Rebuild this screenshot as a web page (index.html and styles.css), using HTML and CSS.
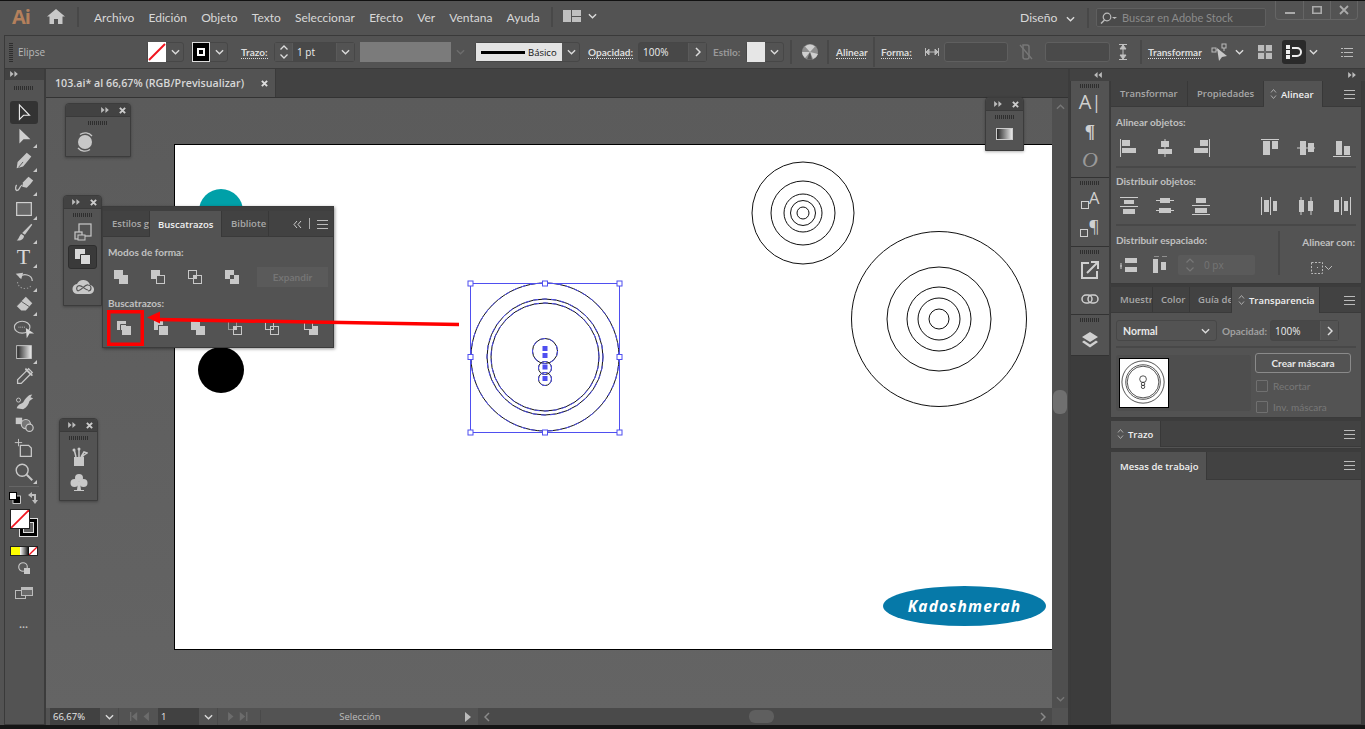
FILE: index.html
```html
<!DOCTYPE html>
<html lang="es">
<head>
<meta charset="utf-8">
<title>Adobe Illustrator</title>
<link rel="stylesheet" href="styles.css">
</head>
<body>
<svg class="defs" width="0" height="0" aria-hidden="true">
  <defs>
    <symbol id="chev" viewBox="0 0 10 6"><path d="M1 1l4 4 4-4" fill="none" stroke="currentColor" stroke-width="1.5"/></symbol>
    <symbol id="chevr" viewBox="0 0 6 10"><path d="M1 1l4 4-4 4" fill="none" stroke="currentColor" stroke-width="1.5"/></symbol>
    <symbol id="chevl" viewBox="0 0 6 10"><path d="M5 1L1 5l4 4" fill="none" stroke="currentColor" stroke-width="1.5"/></symbol>
    <symbol id="dblr" viewBox="0 0 9 7"><path d="M0 0l4 3.5L0 7zM5 0l4 3.5L5 7z" fill="currentColor"/></symbol>
    <symbol id="dbll" viewBox="0 0 9 7"><path d="M4 0L0 3.5 4 7zM9 0L5 3.5 9 7z" fill="currentColor"/></symbol>
    <symbol id="x" viewBox="0 0 8 8"><path d="M1 1l6 6M7 1L1 7" stroke="currentColor" stroke-width="2.2"/></symbol>
    <symbol id="menu" viewBox="0 0 11 9"><path d="M0 .5h11M0 4.5h11M0 8.5h11" stroke="currentColor"/></symbol>
    <symbol id="updown" viewBox="0 0 7 12"><path d="M1 4.5l2.5-3 2.5 3M1 7.500l2.500 3 2.500-3" fill="none" stroke="currentColor"/></symbol>
    <linearGradient id="grad"><stop offset="0" stop-color="#222"/><stop offset="1" stop-color="#eee"/></linearGradient>
  </defs>
</svg>

<header class="titlebar">
  <span class="ai-logo">Ai</span>
  <svg class="home" viewBox="0 0 18 15"><path d="M9 0l9 7.500h-2.500V15H11V10H7v5H2.500V7.500H0z" fill="#c8c8c8"/></svg>
  <i class="vsep sep-home"></i>
  <nav class="menu">
    <span>Archivo</span><span>Edición</span><span>Objeto</span><span>Texto</span><span>Seleccionar</span><span>Efecto</span><span>Ver</span><span>Ventana</span><span>Ayuda</span>
  </nav>
  <i class="vsep sep-menu"></i>
  <svg class="layout-ic" viewBox="0 0 18 12"><path d="M0 0h8v12H0zM9 0h9v6H9zM9 7h9v5H9z" fill="#c0c0c0"/></svg>
  <svg class="ch ch-layout"><use href="#chev"/></svg>
  <span class="workspace-name">Diseño</span>
  <svg class="ch ch-ws"><use href="#chev"/></svg>
  <i class="vsep sep-ws"></i>
  <div class="search">
    <svg class="search-ic" viewBox="0 0 18 12"><circle cx="7" cy="5" r="3.800" fill="none" stroke="#bbb" stroke-width="1.200"/><path d="M4.500 8L1 11.500" stroke="#bbb" stroke-width="1.500"/><path d="M12 5h5l-2.500 2z" fill="#bbb"/></svg>
    <span>Buscar en Adobe Stock</span>
  </div>
  <div class="winbtns">
    <span class="winbtn"><svg viewBox="0 0 10 10"><path d="M0 7h10v2H0z" fill="#aaa"/></svg></span>
    <span class="winbtn"><svg viewBox="0 0 10 10"><path d="M.8 1.800h8.400v6.500H.8z" fill="none" stroke="#aaa" stroke-width="1.600"/></svg></span>
    <span class="winbtn"><svg viewBox="0 0 10 10"><path d="M1 1l8 8M9 1l-8 8" stroke="#aaa" stroke-width="1.800"/></svg></span>
  </div>
</header>

<div class="controlbar">
  <i class="grip-v"></i>
  <span class="cb-name">Elipse</span>
  <div class="combo fillc">
    <span class="swatch none"><svg viewBox="0 0 18 18"><path d="M1 17L17 1" stroke="#f0141e" stroke-width="2"/></svg></span>
    <span class="chbox"><svg class="ch"><use href="#chev"/></svg></span>
  </div>
  <div class="combo strokec">
    <span class="swatch black"><i></i></span>
    <span class="chbox"><svg class="ch"><use href="#chev"/></svg></span>
  </div>
  <span class="lbl lbl-trazo">Trazo:</span>
  <div class="combo weight">
    <span class="spin"><svg viewBox="0 0 10 16"><path d="M1.500 5.500L5 2l3.500 3.500M1.500 10.500L5 14l3.500-3.500" fill="none" stroke="#ddd" stroke-width="1.300"/></svg></span>
    <span class="val">1 pt</span>
    <span class="chbox"><svg class="ch"><use href="#chev"/></svg></span>
  </div>
  <div class="disabled-field"><span class="chbox faded"><svg class="ch"><use href="#chev"/></svg></span></div>
  <div class="combo linestyle">
    <span class="line-prev"><i></i><b>Básico</b></span>
    <span class="chbox"><svg class="ch"><use href="#chev"/></svg></span>
  </div>
  <span class="lbl lbl-op">Opacidad:</span>
  <div class="combo opacity">
    <span class="val">100%</span>
    <span class="chbox"><svg class="chr"><use href="#chevr"/></svg></span>
  </div>
  <span class="lbl-plain lbl-est">Estilo:</span>
  <div class="combo stylec">
    <span class="swatch light"></span>
    <span class="chbox"><svg class="ch"><use href="#chev"/></svg></span>
  </div>
  <i class="vsep sep-a"></i>
  <svg class="recolor" viewBox="0 0 16 16"><circle cx="8" cy="8" r="8" fill="#8d8d8d"/><path d="M8 8L3 2.500A8 8 0 0 1 13 2.500zM8 8l8 2a8 8 0 0 1-5 5zM8 8l-5 6A8 8 0 0 1 0 8z" fill="#cfcfcf"/><path d="M8 8l-3 7.500 5 .300z" fill="#555"/></svg>
  <i class="vsep sep-b"></i>
  <span class="lbl lbl-ali">Alinear</span>
  <i class="vsep sep-c"></i>
  <span class="lbl lbl-for">Forma:</span>
  <svg class="w-ic" viewBox="0 0 14 8"><path d="M.5 0v8M13.500 0v8M1 4h12M1 4l3-3v6zM13 4l-3-3v6z" stroke="#bbb" fill="#bbb"/></svg>
  <span class="empty-field ef1"></span>
  <svg class="link-ic" viewBox="0 0 14 18"><path d="M4 2h4a2 2 0 0 1 2 2v10a2 2 0 0 1-2 2H6a2 2 0 0 1-2-2z" fill="none" stroke="#777" stroke-width="1.500"/><path d="M1 2l12 14" stroke="#777" stroke-width="1.300"/></svg>
  <span class="empty-field ef2"></span>
  <svg class="h-ic" viewBox="0 0 8 16"><path d="M0 .5h8M0 15.500h8M4 1v14M4 1L1 5h6zM4 15l-3-4h6z" stroke="#c0c0c0" fill="#c0c0c0"/></svg>
  <i class="vsep sep-d"></i>
  <span class="lbl lbl-tra">Transformar</span>
  <svg class="sel-ic" viewBox="0 0 18 18"><rect x="1" y="5" width="4" height="4" fill="none" stroke="#bbb"/><rect x="11" y="1" width="4" height="4" fill="none" stroke="#bbb"/><path d="M5 7h3M13 5v3" stroke="#bbb"/><path d="M6 5l10 8-5 1-3 4z" fill="#c8c8c8"/></svg>
  <svg class="ch ch-sel"><use href="#chev"/></svg>
  <svg class="grid-ic" viewBox="0 0 14 14"><path d="M0 0h6v6H0zM8 0h6v6H8zM0 8h6v6H0zM8 8h6v6H8z" fill="#bbb"/><path d="M7 0v14M0 7h14" stroke="#777"/></svg>
  <span class="snap"><svg viewBox="0 0 16 14"><path d="M0 0h4v4H0zM0 5h4v4H0zM0 10h4v4H0z" fill="#eee"/><path d="M6 3h5a4 4 0 0 1 0 8H6" fill="none" stroke="#eee" stroke-width="2"/></svg></span>
  <svg class="ch ch-snap"><use href="#chev"/></svg>
  <svg class="list-ic" viewBox="0 0 12 9"><path d="M3 .5h9M3 4.500h9M3 8.500h9M0 .5h2M0 4.500h2M0 8.500h2" stroke="#bbb"/></svg>
</div>

<div class="workspace">
  <aside class="toolbar">
    <div class="tb-head"><svg class="dbl"><use href="#dblr"/></svg></div>
    <i class="grip g-tool"></i>
    <div class="tools">
      <span class="tool active"><svg viewBox="0 0 24 24"><path d="M7 3v16l4.500-4.500H18z" fill="none" stroke="#eee" stroke-width="1.200"/></svg></span>
      <span class="tool more"><svg viewBox="0 0 24 24"><path d="M7 3v16l4.500-4.500H19z" fill="#d0d0d0"/></svg></span>
      <span class="tool more"><svg viewBox="0 0 24 24"><path d="M15 3l5 4-3 4-6 7-7 2 1-7 6-6z" fill="#c8c8c8"/><path d="M6 19l5-6" stroke="#555"/></svg></span>
      <span class="tool more"><svg viewBox="0 0 24 24"><path d="M17 3l5 4-3 4-4 4-5-1 1-5 4-4z" fill="#c8c8c8"/><path d="M10 12c-4 2-2 6-6 6-2-1-1-5 0-6" fill="none" stroke="#c8c8c8" stroke-width="1.400"/></svg></span>
      <span class="tool more"><svg viewBox="0 0 24 24"><rect x="4" y="5" width="16" height="14" fill="#676767" stroke="#d0d0d0" stroke-width="1.300"/></svg></span>
      <span class="tool more"><svg viewBox="0 0 24 24"><path d="M20 2l1 1-8 11-3-2zM9 13c-2 1-2 5-5 7 4 1 8-1 8-5z" fill="#c8c8c8"/></svg></span>
      <span class="tool more"><span class="t-glyph">T</span></span>
      <span class="tool more"><svg viewBox="0 0 24 24"><path d="M7 8c4-5 14-3 14 4" fill="none" stroke="#c8c8c8" stroke-width="1.300"/><path d="M3 4l8-1-2 7z" fill="#c8c8c8"/><path d="M5 13c0 7 10 10 15 4" fill="none" stroke="#999" stroke-width="1.200" stroke-dasharray="1.500 2"/></svg></span>
      <span class="tool more"><svg viewBox="0 0 24 24"><path d="M14 3l7 7-7 8H9l-5-5z" fill="#c8c8c8"/><path d="M4 13l5-5 9 6" fill="none" stroke="#555"/></svg></span>
      <span class="tool"><svg viewBox="0 0 24 24"><ellipse cx="10" cy="10" rx="8.500" ry="6.500" fill="none" stroke="#c8c8c8" stroke-width="1.200"/><path d="M6 10h8" stroke="#c8c8c8" stroke-dasharray="1 1"/><path d="M14 11l9 6-5 0-3 5z" fill="#d8d8d8"/></svg></span>
      <span class="tool more"><svg viewBox="0 0 24 24"><rect x="4" y="4" width="16" height="14" fill="url(#grad)" stroke="#ccc"/></svg></span>
      <span class="tool"><svg viewBox="0 0 24 24"><path d="M17 3l4 4-2 2-10 10H5v-4L15 5z" fill="none" stroke="#c8c8c8" stroke-width="1.400"/><path d="M14 2l8 8-2 1-7-7z" fill="#c8c8c8"/></svg></span>
      <span class="tool"><svg viewBox="0 0 24 24"><path d="M4 20c2-6 6-4 8-8 2-3 5-7 9-7l-2 3 3 1-4 3c-1 4-3 7-7 9z" fill="#c8c8c8"/><circle cx="6" cy="11" r="2.200" fill="none" stroke="#c8c8c8"/></svg></span>
      <span class="tool"><svg viewBox="0 0 24 24"><path d="M3 4h7v7H3z" fill="#c8c8c8"/><circle cx="14" cy="11" r="5" fill="#777" stroke="#c8c8c8" stroke-width="1.300"/><circle cx="18" cy="15" r="4" fill="#5a5a5a" stroke="#c8c8c8" stroke-width="1.300"/></svg></span>
      <span class="tool"><svg viewBox="0 0 24 24"><path d="M8 8h9l3 3v9H8z" fill="none" stroke="#c8c8c8" stroke-width="1.400"/><path d="M6 1v8M2 5h8" stroke="#c8c8c8"/></svg></span>
      <span class="tool more"><svg viewBox="0 0 24 24"><circle cx="10" cy="9" r="6.500" fill="none" stroke="#c8c8c8" stroke-width="1.500"/><path d="M15 14l6 6" stroke="#c8c8c8" stroke-width="2.200"/></svg></span>
    </div>
    <i class="tb-rule"></i>
    <div class="mini-row">
      <svg viewBox="0 0 12 12"><rect x="4" y="4" width="7.500" height="7.500" fill="#000" stroke="#eee" stroke-width=".8"/><rect x=".5" y=".5" width="7" height="7" fill="#fff" stroke="#000"/></svg>
      <svg viewBox="0 0 12 12"><path d="M1 3l4-3v2h4v6h2l-3 4-3-4h2V4H5v2z" fill="#bdbdbd"/></svg>
    </div>
    <div class="fillstroke">
      <span class="fs-stroke"><i></i></span>
      <span class="fs-fill"><svg viewBox="0 0 18 18"><path d="M0 18L18 0" stroke="#f0141e" stroke-width="1.800"/></svg></span>
    </div>
    <div class="modes">
      <i class="m-yellow"></i><i class="m-grad"></i>
      <svg viewBox="0 0 9 9"><rect width="9" height="9" fill="#fff"/><path d="M0 9L9 0" stroke="#f0141e" stroke-width="1.500"/></svg>
    </div>
    <svg class="drawmode" viewBox="0 0 12 12"><circle cx="5" cy="5" r="4.300" fill="#5a5a5a" stroke="#c8c8c8" stroke-width="1.100"/><path d="M6 6h6v6H6z" fill="#c8c8c8"/></svg>
    <svg class="screenmode" viewBox="0 0 18 12"><rect x=".5" y="3.500" width="10" height="8" fill="none" stroke="#bbb"/><rect x="6.500" y=".5" width="11" height="8" fill="#6a6a6a" stroke="#bbb"/><path d="M6.500 1h11v2h-11z" fill="#bbb"/></svg>
    <span class="dots">•••</span>
  </aside>

  <main class="doc">
    <div class="doc-tabs">
      <div class="doc-tab"><span>103.ai* al 66,67% (RGB/Previsualizar)</span><svg class="tabx"><use href="#x"/></svg></div>
    </div>
    <div class="canvas-row">
      <div class="canvas">
        <div class="artboard">
          <svg class="art" viewBox="175 145 878 504">
            <circle cx="221" cy="211" r="22" fill="#00a0a8"/>
            <circle cx="221" cy="370" r="23" fill="#000"/>
            <g class="rings">
              <circle cx="803" cy="213" r="51"/><circle cx="803" cy="213" r="32"/><circle cx="803" cy="213" r="19"/><circle cx="803" cy="213" r="12.500"/><circle cx="803" cy="213" r="6"/>
              <circle cx="939" cy="319" r="87.500"/><circle cx="939" cy="319" r="52"/><circle cx="939" cy="319" r="32"/><circle cx="939" cy="319" r="21"/><circle cx="939" cy="319" r="10"/>
              <circle cx="545" cy="357" r="74"/><circle cx="545" cy="357" r="58"/><circle cx="545" cy="357" r="54"/><circle cx="545" cy="351" r="12.500"/><circle cx="545" cy="368" r="6.500"/><circle cx="545" cy="379" r="6.500"/>
            </g>
            <g class="sel">
              <circle cx="545" cy="357" r="74"/><circle cx="545" cy="357" r="58"/><circle cx="545" cy="357" r="54"/><circle cx="545" cy="351" r="12.500"/><circle cx="545" cy="368" r="6.500"/><circle cx="545" cy="379" r="6.500"/>
              <rect x="470.500" y="283.500" width="149" height="149"/>
            </g>
            <g class="sel-dots"><rect x="542.500" y="346" width="5" height="5"/><rect x="542.500" y="353" width="5" height="5"/><rect x="542.500" y="364.500" width="5" height="5"/><rect x="542.500" y="376" width="5" height="5"/></g>
            <g class="handles">
              <rect x="468" y="281" width="5" height="5"/><rect x="542.500" y="281" width="5" height="5"/><rect x="617" y="281" width="5" height="5"/>
              <rect x="468" y="354.500" width="5" height="5"/><rect x="617" y="354.500" width="5" height="5"/>
              <rect x="468" y="430" width="5" height="5"/><rect x="542.500" y="430" width="5" height="5"/><rect x="617" y="430" width="5" height="5"/>
            </g>
            <ellipse cx="964.500" cy="606" rx="81.500" ry="20" fill="#0679a8"/>
            <text x="964.500" y="612" class="logo-text">Kadoshmerah</text>
          </svg>
        </div>
      </div>
      <div class="vscroll">
        <svg class="chs"><use href="#chev"/></svg>
        <i class="vthumb"></i>
        <svg class="chs"><use href="#chev"/></svg>
      </div>
    </div>
    <footer class="status">
      <span class="st-field st-zoom">66,67%</span>
      <span class="st-ch"><svg class="ch"><use href="#chev"/></svg></span>
      <span class="st-nav"><svg viewBox="0 0 22 10"><path d="M1 0h1.500v10H1zM9 0v10L3 5zM22 0v10l-6-5z" fill="#6c6c6c"/></svg></span>
      <span class="st-field st-page">1</span>
      <span class="st-ch"><svg class="ch"><use href="#chev"/></svg></span>
      <span class="st-nav"><svg viewBox="0 0 22 10"><path d="M0 0v10l6-5zM13 0v10l6-5zM20 0h1.500v10H20z" fill="#6c6c6c"/></svg></span>
      <span class="st-label">Selección</span>
      <svg class="st-play" viewBox="0 0 6 10"><path d="M0 0l6 5-6 5z" fill="#bbb"/></svg>
      <div class="hscroll">
        <svg class="st-l"><use href="#chevl"/></svg>
        <i class="hthumb"></i>
        <svg class="st-r"><use href="#chevr"/></svg>
      </div>
      <span class="corner"></span>
    </footer>
  </main>

  <aside class="dock">
    <div class="dock-head"><svg class="dbl dbl-a"><use href="#dbll"/></svg><svg class="dbl dbl-b"><use href="#dblr"/></svg></div>
    <div class="dock-body">
      <div class="iconcol">
        <div class="icgroup ig1">
          <i class="grip"></i>
          <span class="dock-g g-a">A<small>|</small></span>
          <span class="dock-g g-p">¶</span>
          <span class="dock-g g-o">O</span>
        </div>
        <div class="icgroup ig2">
          <i class="grip"></i>
          <span class="dock-g2"><i class="sq"></i><b>A</b></span>
          <span class="dock-g2"><i class="sq"></i><b>¶</b></span>
        </div>
        <div class="icgroup ig3">
          <i class="grip"></i>
          <svg class="ic-exp" viewBox="0 0 18 18"><path d="M8 2H1v15h15v-7" fill="none" stroke="#d0d0d0" stroke-width="2"/><path d="M6 12L16 2M10 1h7v7" fill="none" stroke="#d0d0d0" stroke-width="2"/></svg>
          <svg class="ic-link" viewBox="0 0 18 10"><rect x="1" y="1" width="10" height="8" rx="4" fill="none" stroke="#d0d0d0" stroke-width="1.500"/><rect x="7" y="1" width="10" height="8" rx="4" fill="none" stroke="#d0d0d0" stroke-width="1.500"/></svg>
        </div>
        <div class="icgroup ig4">
          <i class="grip"></i>
          <svg class="ic-layers" viewBox="0 0 16 16"><path d="M8 0l8 5-8 5-8-5zM2 8.500l6 4 6-4 2 1.500-8 5.500L0 10z" fill="#d0d0d0"/></svg>
        </div>
      </div>
      <div class="panels">
        <section class="panel p-align">
          <div class="tabs">
            <span class="tab t-transf">Transformar</span>
            <span class="tab t-prop">Propiedades</span>
            <span class="tab on t-ali"><svg class="ud"><use href="#updown"/></svg>Alinear</span>
            <svg class="pmenu"><use href="#menu"/></svg>
          </div>
          <div class="pbody">
            <h4>Alinear objetos:</h4>
            <div class="airow">
              <div class="aigroup">
                <svg viewBox="0 0 18 18"><path d="M.5 0v18" stroke="#ccc"/><path d="M2 1h8v6H2zM2 9h14v5H2z"/></svg>
                <svg viewBox="0 0 18 18"><path d="M9 0v18" stroke="#ccc"/><path d="M5 2h8v6H5zM2 10h14v5H2z"/></svg>
                <svg viewBox="0 0 18 18"><path d="M17.500 0v18" stroke="#ccc"/><path d="M8 1h8v6H8zM2 9h14v5H2z"/></svg>
              </div>
              <div class="aigroup">
                <svg viewBox="0 0 18 18"><path d="M0 .5h18" stroke="#ccc"/><path d="M2 2h7v14H2zM11 2h6v8h-6z"/></svg>
                <svg viewBox="0 0 18 18"><path d="M0 9h18" stroke="#ccc"/><path d="M3 2h6v14H3zM11 4h6v9h-6z"/></svg>
                <svg viewBox="0 0 18 18"><path d="M0 17.500h18" stroke="#ccc"/><path d="M3 2h6v14H3zM11 7h6v9h-6z"/></svg>
              </div>
            </div>
            <i class="hr"></i>
            <h4>Distribuir objetos:</h4>
            <div class="airow">
              <div class="aigroup">
                <svg viewBox="0 0 18 18"><path d="M0 .5h18M0 9.500h18" stroke="#ccc"/><path d="M4 3h10v4H4zM3 12h12v5H3z"/></svg>
                <svg viewBox="0 0 18 18"><path d="M0 3.500h18M0 13.500h18" stroke="#ccc"/><path d="M4 1h10v5H4zM3 11h12v5H3z"/></svg>
                <svg viewBox="0 0 18 18"><path d="M0 8.500h18M0 17.500h18" stroke="#ccc"/><path d="M4 1h10v5H4zM3 11h12v5H3z"/></svg>
              </div>
              <div class="aigroup">
                <svg viewBox="0 0 18 18"><path d="M.5 0v18M9.500 0v18" stroke="#ccc"/><path d="M3 3h5v12H3zM12 4h4v10h-4z"/></svg>
                <svg viewBox="0 0 18 18"><path d="M4 0v18M14 0v18" stroke="#ccc"/><path d="M2 3h5v12H2zM11 4h5v10h-5z"/></svg>
                <svg viewBox="0 0 18 18"><path d="M8.500 0v18M17.500 0v18" stroke="#ccc"/><path d="M1 3h5v12H1zM11 4h4v10h-4z"/></svg>
              </div>
            </div>
            <i class="hr"></i>
            <div class="ai-bottom">
              <div class="ai-left">
                <h4>Distribuir espaciado:</h4>
                <div class="spacing">
                  <svg viewBox="0 0 18 16"><path d="M1 6v6M0 9h2" stroke="#ccc"/><path d="M5 1h12v5H5zM5 10h12v5H5z" fill="#c8c8c8"/></svg>
                  <svg viewBox="0 0 16 18"><path d="M2 0h5M10 0h5" stroke="#ccc"/><path d="M1 3h5v14H1zM9 6h5v8H9z" fill="#c8c8c8"/></svg>
                  <div class="px-field"><svg viewBox="0 0 10 16"><path d="M1.500 5.500L5 2l3.500 3.500M1.500 10.500L5 14l3.500-3.500" fill="none" stroke="#777" stroke-width="1.200"/></svg><span>0 px</span></div>
                </div>
              </div>
              <div class="ai-right">
                <h4>Alinear con:</h4>
                <svg class="ali-to" viewBox="0 0 24 14"><rect x="1.500" y="1.500" width="11" height="11" fill="none" stroke="#bbb" stroke-dasharray="2 1.500"/><path d="M7 6h1v1H7z" fill="#bbb"/><path d="M15 5l3.500 3.500L22 5" fill="none" stroke="#bbb"/></svg>
              </div>
            </div>
          </div>
        </section>

        <section class="panel p-trans">
          <div class="tabs">
            <span class="tab t-mue">Muestr</span>
            <span class="tab t-col">Color</span>
            <span class="tab t-gui">Guía de</span>
            <span class="tab on t-tra"><svg class="ud"><use href="#updown"/></svg>Transparencia</span>
            <svg class="pmenu"><use href="#menu"/></svg>
          </div>
          <div class="pbody">
            <div class="blend">
              <div class="combo c-normal"><span>Normal</span><svg class="ch"><use href="#chev"/></svg></div>
              <span class="lbl-plain op-l">Opacidad:</span>
              <div class="combo c-op"><span class="val">100%</span><span class="chbox"><svg class="chr"><use href="#chevr"/></svg></span></div>
            </div>
            <i class="hr hr-t"></i>
            <div class="mask">
              <div class="thumbwrap">
                <svg class="thumb" viewBox="0 0 50 50">
                  <g class="rings thin"><circle cx="24" cy="24" r="22"/><circle cx="24" cy="24" r="18"/><circle cx="24" cy="24" r="16.500"/><circle cx="24" cy="21" r="3.500"/><circle cx="24" cy="26" r="1.800"/><circle cx="24" cy="29" r="1.800"/></g>
                </svg>
              </div>
              <div class="maskctl">
                <span class="mask-btn">Crear máscara</span>
                <label class="chk"><i></i>Recortar</label>
                <label class="chk"><i></i>Inv. máscara</label>
              </div>
            </div>
          </div>
        </section>

        <section class="panel p-trazo">
          <div class="tabs">
            <span class="tab on t-trz"><svg class="ud"><use href="#updown"/></svg>Trazo</span>
            <svg class="pmenu"><use href="#menu"/></svg>
          </div>
        </section>

        <section class="panel p-mesas">
          <div class="tabs">
            <span class="tab on t-mes">Mesas de trabajo</span>
            <svg class="pmenu"><use href="#menu"/></svg>
          </div>
          <div class="pbody fillbody"></div>
        </section>
      </div>
    </div>
  </aside>
</div>
<div class="bottomstrip"></div>

<div class="float f1">
  <div class="fhead"><svg class="dbl"><use href="#dblr"/></svg><svg class="fx"><use href="#x"/></svg></div>
  <i class="grip"></i>
  <svg class="f-ic" viewBox="0 0 20 20"><circle cx="10" cy="10" r="7" fill="#c8c8c8"/><path d="M5 2.500A9 9 0 0 1 17 4M15 17.500A9 9 0 0 1 3 16" fill="none" stroke="#c8c8c8" stroke-width="1.300"/></svg>
</div>

<div class="float f2">
  <div class="fhead"><svg class="dbl"><use href="#dblr"/></svg><svg class="fx"><use href="#x"/></svg></div>
  <i class="grip"></i>
  <svg class="f-ic" viewBox="0 0 18 18"><rect x="5" y="1" width="12" height="12" fill="none" stroke="#c8c8c8" stroke-width="1.200"/><rect x="1" y="9" width="7" height="7" fill="#5a5a5a" stroke="#c8c8c8" stroke-width="1.200"/><rect x="4" y="12" width="7" height="5" fill="#5a5a5a" stroke="#c8c8c8"/></svg>
  <span class="f-sel"><svg viewBox="0 0 16 16"><path d="M0 0h10v10H0z" fill="#d8d8d8"/><path d="M5.500 5.500h10v10h-10z" fill="#d8d8d8" stroke="#333"/></svg></span>
  <svg class="f-ic cc" viewBox="0 0 22 16"><path d="M6 15a5 5 0 0 1-1-10 7 7 0 0 1 13 1 4.500 4.500 0 0 1-1 9z" fill="#c8c8c8"/><path d="M6 12a3 3 0 0 1 0-5c3-2 7 4 10 4M16 12a3 3 0 0 0 0-6c-3-1-6 5-10 6" fill="none" stroke="#555" stroke-width="1.200"/></svg>
</div>

<div class="float f3">
  <div class="tabs">
    <span class="tab t-est">Estilos g</span>
    <span class="tab on t-bus">Buscatrazos</span>
    <span class="tab t-bib">Bibliote</span>
    <svg class="f3-coll" viewBox="0 0 9 9"><path d="M4 1L1 4.500 4 8M8 1L5 4.500 8 8" fill="none" stroke="#ccc"/></svg>
    <i class="f3-bar"></i>
    <svg class="pmenu"><use href="#menu"/></svg>
  </div>
  <div class="f3-body">
    <h4>Modos de forma:</h4>
    <div class="pf-row modes-row">
      <svg viewBox="0 0 14 14"><path d="M0 0h9v5h5v9H5V9H0z"/></svg>
      <svg viewBox="0 0 14 14"><path d="M0 0h9v5H5v4H0z"/><rect x="5.500" y="5.500" width="8" height="8" class="ol"/></svg>
      <svg viewBox="0 0 14 14"><rect x=".5" y=".5" width="8" height="8" class="ol"/><rect x="5.500" y="5.500" width="8" height="8" class="ol"/><path d="M5 5h4v4H5z"/></svg>
      <svg viewBox="0 0 14 14"><path d="M0 0h9v5H5v4H0zM9 5h5v9H5V9h4z"/></svg>
      <span class="expand">Expandir</span>
    </div>
    <h4 class="h-pf">Buscatrazos:</h4>
    <div class="pf-row finders">
      <svg viewBox="0 0 14 14"><path d="M0 0h9v9H0z"/><path d="M3.500 3.500h7v7h-7z" class="dk"/><path d="M5 5h9v9H5z"/></svg>
      <svg viewBox="0 0 14 14"><path d="M0 0h9v4H4v5H0z"/><path d="M5 5h9v9H5z"/></svg>
      <svg viewBox="0 0 14 14"><path d="M0 0h9v5h5v9H5V9H0z"/></svg>
      <svg viewBox="0 0 14 14"><rect x=".5" y=".5" width="8" height="8" class="ol dim"/><rect x="5.500" y="5.500" width="8" height="8" class="ol"/><path d="M5 5h4v4H5z"/></svg>
      <svg viewBox="0 0 14 14"><rect x=".5" y=".5" width="8" height="8" class="ol"/><rect x="5.500" y="5.500" width="8" height="8" class="ol"/></svg>
      <svg class="last" viewBox="0 0 14 14"><rect x=".5" y=".5" width="8" height="8" class="ol"/><path d="M9 5h5v9H5V9h4z"/></svg>
    </div>
  </div>
</div>

<div class="float f4">
  <div class="fhead"><svg class="dbl"><use href="#dblr"/></svg><svg class="fx"><use href="#x"/></svg></div>
  <i class="grip"></i>
  <svg class="f-ic" viewBox="0 0 18 20"><path d="M4 10h10v9H4z" fill="#c8c8c8"/><path d="M6 10L4 2M9 10V1M11 10l3-5 3 1-3 2-2 2" stroke="#c8c8c8" stroke-width="1.500" fill="none"/><circle cx="4" cy="3" r="1.500" fill="#c8c8c8"/><circle cx="9" cy="2" r="1.500" fill="#c8c8c8"/></svg>
  <svg class="f-ic" viewBox="0 0 18 18"><circle cx="9" cy="5" r="4" fill="#c8c8c8"/><circle cx="4.500" cy="10" r="4" fill="#c8c8c8"/><circle cx="13.500" cy="10" r="4" fill="#c8c8c8"/><path d="M8 9h2l1 8H7z" fill="#c8c8c8"/><path d="M4 17h10v1H4z" fill="#c8c8c8"/></svg>
</div>

<div class="float f5">
  <div class="fhead"><svg class="dbl"><use href="#dblr"/></svg><svg class="fx"><use href="#x"/></svg></div>
  <i class="grip"></i>
  <svg class="f-ic" viewBox="0 0 17 12"><rect x=".5" y=".5" width="16" height="11" fill="url(#grad)" stroke="#ccc"/></svg>
</div>

<svg class="annot" viewBox="0 0 1365 729">
  <rect x="108.750" y="311.750" width="33.500" height="32.500" fill="none" stroke="#f00" stroke-width="3.500"/>
  <path d="M158 319.500L459 324.500" stroke="#f00" stroke-width="3.500"/>
  <path d="M147 317.500l13-6v12z" fill="#f00"/>
</svg>
</body>
</html>
```

FILE: styles.css
```css
* { box-sizing: border-box; }
html, body { margin: 0; padding: 0; }
body {
  position: relative;
  width: 1365px;
  height: 729px;
  overflow: hidden;
  background: #535353;
  font-family: "Open Sans", "Liberation Sans", sans-serif;
  font-size: 10px;
  color: #d0d0d0;
  display: flex;
  flex-direction: column;
}
svg { display: block; flex: none; }
i { display: block; flex: none; }
h4 { margin: 0; font: 700 10px/12px "Lato", sans-serif; color: #c0c0c0; white-space: nowrap; }
.defs { position: absolute; }

.ch { width: 9px; height: 6px; color: #dcdcdc; }
.chr { width: 6px; height: 10px; color: #dcdcdc; }
.dbl { width: 9px; height: 7px; color: #bbb; }
.vsep { width: 2px; background: #484848; }
.grip {
  width: 20px;
  height: 4px;
  background: repeating-linear-gradient(90deg, #2e2e2e 0 1px, transparent 1px 2px);
}

/* title bar */
.titlebar {
  flex: none;
  height: 35px;
  border-top: 1px solid #111;
  display: flex;
  align-items: center;
  padding-left: 12px;
  position: relative;
}
.ai-logo { font: 700 20px "Open Sans", sans-serif; color: #b4805c; width: 20px; letter-spacing: -1px; margin-top: -4px; }
.home { width: 18px; height: 15px; margin-left: 15px; margin-top: -3px; }
.sep-home { height: 20px; margin-left: 12px; margin-top: -2px; }
.menu { display: flex; gap: 14.200px; margin-left: 15px; font-size: 12px; font-family: "Lato", sans-serif; color: #d8d8d8; margin-top: -1px; width: 457px; }
.sep-menu { height: 20px; margin-left: 0; margin-top: -2px; }
.layout-ic { width: 18px; height: 12px; margin-left: 10px; margin-top: -5px; }
.ch-layout { margin-left: 7px; margin-top: -4px; }
.workspace-name { font: 12.200px "Lato", sans-serif; color: #d8d8d8; margin-left: 423px; width: 36px; margin-top: -1px; }
.ch-ws { margin-left: 10px; margin-top: 2px; }
.sep-ws { height: 20px; margin-left: 12px; margin-top: -1px; }
.search {
  width: 170px; height: 19px; margin-left: 7px; margin-top: -1px;
  background: #4a4a4a; border: 1px solid #5f5f5f; border-radius: 2px;
  display: flex; align-items: center; padding-left: 3px; gap: 4px;
  font: 11px "Lato", sans-serif; color: #8b8b8b;
}
.search-ic { width: 18px; height: 12px; }
.winbtns { display: flex; margin-left: 9px; margin-top: -15px; height: 19px; border: 1px solid #656565; border-top: 0; border-radius: 0 0 4px 4px; }
.winbtn { width: 27px; display: flex; align-items: center; justify-content: center; border-left: 1px solid #656565; }
.winbtn:first-child { border-left: 0; }
.winbtn svg { width: 10px; height: 10px; }

/* control bar */
.controlbar {
  flex: none;
  height: 34px;
  margin-left: 4px;
  border-top: 1px solid #3a3a3a;
  border-left: 1px solid #3a3a3a;
  border-bottom: 1px solid #3a3a3a;
  display: flex;
  align-items: center;
}
.grip-v { width: 4px; height: 20px; margin-left: 4px; background: repeating-linear-gradient(0deg, #2e2e2e 0 1px, transparent 1px 2px); }
.cb-name { width: 129px; margin-left: 5px; color: #b8b8b8; font-size: 10px; }
.combo { display: flex; align-items: center; height: 20px; border: 1px solid #474747; border-radius: 3px; }
.chbox { width: 18px; height: 100%; display: flex; align-items: center; justify-content: center; flex: none; }
.swatch { width: 18px; height: 20px; display: block; flex: none; }
.swatch.none { background: #fff; }
.swatch.none svg { width: 18px; height: 20px; }
.swatch.black { background: #000; border: 1px solid #ddd; display: flex; align-items: center; justify-content: center; }
.swatch.black i { width: 8px; height: 8px; border: 2px solid #fff; }
.swatch.light { background: #e6e6e6; }
.fillc { width: 37px; }
.strokec { width: 37px; margin-left: 7px; }
.lbl { font: 700 10px/12px "Lato", sans-serif; color: #dcdcdc; border-bottom: 1px dotted #ddd; flex: none; white-space: nowrap; }
.lbl-plain { font: 700 10px "Lato", sans-serif; color: #a0a0a0; flex: none; }
.lbl-trazo { margin-left: 13px; width: 27px; }
.weight { margin-left: 6px; width: 81px; background: #484848; }
.spin { width: 18px; height: 100%; border-right: 1px solid #5a5a5a; display: flex; align-items: center; justify-content: center; background: #535353; flex: none; }
.spin svg { width: 10px; height: 16px; }
.val { flex: 1; padding-left: 4px; font-size: 10px; color: #eee; }
.weight .chbox { background: #535353; border-left: 1px solid #5a5a5a; }
.disabled-field { width: 109px; height: 20px; margin-left: 5px; background: #7b7b7b; display: flex; justify-content: flex-end; }
.disabled-field .chbox { background: #535353; }
.faded .ch { color: #6d6d6d; }
.linestyle { width: 105px; margin-left: 6px; }
.line-prev { width: 86px; height: 100%; background: #e3e3e3; display: flex; align-items: center; padding-left: 5px; flex: none; }
.line-prev i { width: 44px; height: 3px; background: #000; }
.line-prev b { font-weight: 400; font-size: 9.500px; color: #111; margin-left: 3px; }
.lbl-op { margin-left: 8px; width: 45px; }
.opacity { width: 69px; margin-left: 5px; background: #484848; }
.opacity .chbox { background: #535353; border-left: 1px solid #5a5a5a; }
.lbl-est { margin-left: 6px; width: 27px; color: #999; }
.stylec { width: 38px; margin-left: 6px; }
.sep-a { height: 24px; margin-left: 6px; }
.recolor { width: 16px; height: 16px; margin-left: 10px; }
.sep-b { height: 24px; margin-left: 9px; }
.lbl-ali { margin-left: 7px; width: 30px; }
.sep-c { height: 30px; margin-left: 7px; }
.lbl-for { margin-left: 6px; width: 31px; }
.w-ic { width: 14px; height: 8px; margin-left: 13px; }
.empty-field { height: 20px; background: #4a4a4a; border: 1px solid #5f5f5f; border-radius: 3px; flex: none; }
.ef1 { width: 64px; margin-left: 5px; }
.link-ic { width: 14px; height: 18px; margin-left: 11px; }
.ef2 { width: 65px; margin-left: 12px; }
.h-ic { width: 8px; height: 16px; margin-left: 9px; }
.sep-d { height: 24px; margin-left: 13px; }
.lbl-tra { margin-left: 6px; width: 53px; }
.sel-ic { width: 18px; height: 18px; margin-left: 10px; }
.ch-sel { margin-left: 6px; }
.grid-ic { width: 14px; height: 14px; margin-left: 14px; }
.snap { width: 24px; height: 24px; margin-left: 10px; background: #2a2a2a; border-radius: 3px; display: flex; align-items: center; justify-content: center; }
.snap svg { width: 16px; height: 14px; }
.ch-snap { margin-left: 3px; }
.list-ic { width: 12px; height: 9px; margin-left: 23px; }

/* workspace */
.workspace { flex: 1; min-height: 0; display: flex; }

.toolbar {
  flex: none;
  width: 42px;
  margin-left: 4px;
  padding-right: 2px;
  border-left: 1px solid #3a3a3a;
  border-right: 2px solid #3c3c3c;
  border-bottom: 1px solid #3a3a3a;
  display: flex;
  flex-direction: column;
  align-items: center;
  background: #535353;
}
.tb-head { width: calc(100% + 2px); margin-right: -2px; height: 11px; background: #424242; padding: 2px 0 0 5px; flex: none; }
.tb-head .dbl { width: 8px; height: 6px; }
.g-tool { margin-top: 6px; }
.tools { display: flex; flex-direction: column; margin-top: 11px; }
.tool { width: 28px; height: 24px; display: flex; align-items: center; justify-content: center; position: relative; }
.tool svg { width: 22px; height: 22px; }
.tool.active { background: #333; border-radius: 3px; height: 23px; margin-bottom: 1px; }
.tool.more::after {
  content: ""; position: absolute; right: 1px; bottom: 1px;
  border-left: 4px solid transparent; border-bottom: 4px solid #c8c8c8;
}
.t-glyph { font: 400 22px "Liberation Serif", serif; color: #d8d8d8; line-height: 22px; }
.tb-rule { width: 30px; height: 1px; background: #666; margin-top: 1px; }
.mini-row { display: flex; justify-content: space-between; width: 30px; margin-top: 5px; }
.mini-row svg { width: 12px; height: 12px; }
.fillstroke { width: 28px; height: 28px; margin-top: 5px; position: relative; }
.fs-fill { position: absolute; left: 0; top: 0; width: 20px; height: 20px; background: #fff; border: 1px solid #222; }
.fs-fill svg { width: 18px; height: 18px; }
.fs-stroke { position: absolute; right: 0; bottom: 0; width: 19px; height: 19px; background: #000; border: 1px solid #ddd; padding: 3px; }
.fs-stroke i { width: 11px; height: 11px; background: #616161; border: 1px solid #ddd; }
.modes { display: flex; width: 28px; height: 10px; margin-top: 9px; background: #222; padding: 1px; gap: 0; }
.m-yellow { width: 9px; height: 8px; background: #ff0; }
.m-grad { width: 9px; height: 8px; background: linear-gradient(90deg, #fff, #000); }
.modes svg { width: 8px; height: 8px; }
.drawmode { width: 12px; height: 12px; margin-top: 6px; }
.screenmode { width: 18px; height: 12px; margin-top: 13px; }
.dots { font-size: 8px; color: #bbb; margin-top: 23px; letter-spacing: 0; line-height: 10px; }

/* document */
.doc { flex: 1; min-width: 0; display: flex; flex-direction: column; border-right: 2px solid #3c3c3c; }
.doc-tabs { flex: none; height: 29px; background: #424242; border-bottom: 1px solid #333; display: flex; }
.doc-tab {
  width: 230px; height: 28px; background: #535353;
  display: flex; align-items: center; padding-left: 9px;
  font-size: 10.700px; font-weight: 600; color: #d8d8d8;
  border-right: 1px solid #3a3a3a;
}
.doc-tab span { width: 206px; white-space: nowrap; }
.tabx { width: 7px; height: 7px; color: #ddd; }
.canvas-row { flex: 1; min-height: 0; display: flex; }
.canvas { flex: 1; min-width: 0; position: relative; overflow: hidden; background: linear-gradient(180deg, #5b5b5b, #646464); }
.artboard { position: absolute; left: 128px; top: 46px; width: 879px; height: 506px; background: #fff; border: 1px solid #000; border-right: 0; }
.art { width: 878px; height: 504px; }
.rings circle { fill: none; stroke: #111; stroke-width: 1; }
.rings.thin circle { stroke-width: .8; stroke: #222; }
.sel circle, .sel rect { fill: none; stroke: #4f4ff0; stroke-width: 1; }
.sel circle { stroke-dasharray: 5 4; }
.sel-dots rect { fill: #4f4ff0; }
.handles rect { fill: #fff; stroke: #4f4ff0; stroke-width: 1; }
.logo-text { font: italic 700 15.500px "Open Sans", sans-serif; fill: #fff; text-anchor: middle; letter-spacing: 1.100px; }
.vscroll { flex: none; width: 16px; background: #4f4f4f; display: flex; flex-direction: column; align-items: center; justify-content: space-between; padding: 6px 0; position: relative; }
.chs { width: 9px; height: 6px; color: #777; }
.chs:first-child { transform: scaleY(-1); }
.vthumb { position: absolute; left: 1px; top: 292px; width: 14px; height: 24px; background: #707070; border-radius: 6px; }

.status { flex: none; height: 17px; background: #535353; display: flex; align-items: center; font-size: 9.500px; }
.st-field { height: 100%; background: #414141; color: #e8e8e8; padding-left: 3px; display: flex; align-items: center; }
.st-zoom { width: 50px; margin-left: 4px; }
.st-page { width: 41px; }
.st-ch { width: 18px; height: 100%; display: flex; align-items: center; justify-content: center; }
.st-nav { width: 40px; height: 100%; display: flex; align-items: center; justify-content: center; border-left: 1px solid #4a4a4a; }
.st-nav svg { width: 22px; height: 9px; }
.st-label { width: 199px; margin-left: 3px; text-align: center; color: #bdbdbd; border-left: 1px solid #4a4a4a; }
.st-play { width: 6px; height: 10px; margin-left: 6px; }
.hscroll { flex: 1; height: 100%; margin-left: 7px; background: #4a4a4a; display: flex; align-items: center; justify-content: space-between; padding: 0 6px 0 6px; position: relative; }
.st-l, .st-r { width: 6px; height: 10px; color: #8a8a8a; }
.hthumb { position: absolute; left: 271px; top: 2px; width: 25px; height: 13px; background: #5f5f5f; border-radius: 6px; }
.corner { width: 16px; height: 100%; background: #535353; flex: none; }

/* dock */
.dock { flex: none; width: 295px; display: flex; flex-direction: column; background: #3c3c3c; }
.dock-head { flex: none; height: 12px; background: #424242; display: flex; align-items: center; padding: 0 9px 0 24px; justify-content: space-between; }
.dock-head .dbl { width: 8px; height: 6px; }
.dock-body { flex: 1; min-height: 0; display: flex; }
.iconcol { flex: none; width: 40px; display: flex; flex-direction: column; border-left: 1px solid #3a3a3a; }
.icgroup { width: 38px; background: #535353; display: flex; flex-direction: column; align-items: center; border-bottom: 1px solid #333; }
.icgroup .grip { margin-top: 3px; }
.ig1 { height: 97px; }
.ig2 { height: 69px; }
.ig3 { height: 68px; }
.ig4 { height: 41px; }
.dock-g { font-family: "Open Sans", sans-serif; color: #d0d0d0; line-height: 28px; height: 28px; }
.g-a { font-size: 20px; height: 30px; }
.g-a small { font-size: 18px; font-weight: 400; }
.g-p { font: 700 19px "Liberation Serif", serif; line-height: 28px; }
.g-o { font: italic 22px "Liberation Serif", serif; line-height: 28px; color: #999; }
.dock-g2 { display: flex; align-items: flex-end; height: 28px; padding-top: 3px; gap: 0; }
.dock-g2 i.sq { width: 8px; height: 8px; border: 1.500px solid #d0d0d0; margin-bottom: 4px; }
.dock-g2 b { font: 400 17px "Open Sans", sans-serif; color: #d0d0d0; line-height: 22px; margin-bottom: 4px; }
.ic-exp { width: 18px; height: 18px; margin-top: 7px; }
.ic-link { width: 18px; height: 10px; margin-top: 15px; }
.ic-layers { width: 16px; height: 16px; margin-top: 10px; }

.panels { flex: 1; min-width: 0; display: flex; flex-direction: column; gap: 3px; padding-right: 3px; }
.panel { background: #535353; display: flex; flex-direction: column; border: 1px solid #3a3a3a; border-top: 0; }
.tabs { flex: none; height: 26px; background: #424242; display: flex; align-items: stretch; position: relative; border-bottom: 1px solid #3a3a3a; }
.tab { display: flex; align-items: center; font-size: 9.500px; font-weight: 600; color: #a8a8a8; padding-left: 9px; border-right: 1px solid #383838; flex: none; white-space: nowrap; overflow: hidden; }
.tab.on { background: #535353; color: #f0f0f0; height: 26px; }
.ud { width: 7px; height: 12px; color: #aaa; margin-right: 4px; margin-left: -3px; flex: none; }
.pmenu { width: 11px; height: 9px; color: #bbb; position: absolute; right: 6px; top: 9px; }
.pbody { flex: 1; padding: 0 5px; }
.p-align { height: 203px; }
.p-align h4 { padding-top: 9px; box-sizing: content-box; }
.p-align .hr + h4 { padding-top: 7px; }
.t-transf { width: 77px; }
.t-prop { width: 76px; }
.t-ali { width: 59px; }
.airow { display: flex; justify-content: space-between; padding: 11px 0 0 4px; margin-right: 5px; }
.hr + h4 + .airow { padding-top: 10px; }
.aigroup { display: flex; gap: 18px; }
.aigroup svg { width: 18px; height: 18px; fill: #c8c8c8; }
.hr { height: 2px; background: #484848; margin-top: 9px; }
.ai-bottom { display: flex; }
.ai-left { width: 162px; flex: none; }
.p-align .ai-left h4 { padding-top: 8px; }
.spacing { display: flex; align-items: center; padding: 9px 0 0 4px; }
.spacing svg:first-child { width: 18px; height: 16px; }
.spacing svg:nth-child(2) { width: 16px; height: 18px; margin-left: 14px; }
.px-field { width: 77px; height: 20px; background: #5a5a5a; margin-left: 10px; display: flex; align-items: center; padding-left: 3px; color: #757575; gap: 5px; border-radius: 2px; }
.px-field svg { width: 10px; height: 16px; }
.ai-right { flex: 1; border-left: 2px solid #484848; margin: 5px 0 2px 0; text-align: right; padding-right: 1px; }
.p-align .ai-right h4 { padding-top: 5px; }
.ali-to { width: 24px; height: 14px; margin: 13px 0 0 30px; }

.p-trans { height: 131px; }
.t-mue { width: 42px; }
.t-col { width: 37px; padding-left: 8px; }
.t-gui { width: 42px; padding-left: 8px; }
.t-tra { width: 88px; color: #f0f0f0; }
.blend { display: flex; align-items: center; padding-top: 7px; }
.c-normal { width: 101px; height: 21px; padding: 0 6px; justify-content: space-between; font: 700 10.500px "Lato", sans-serif; color: #e8e8e8; }
.op-l { margin-left: 5px; width: 44px; }
.c-op { width: 69px; height: 21px; margin-left: 4px; background: #484848; }
.c-op .chbox { background: #535353; border-left: 1px solid #5a5a5a; }
.hr-t { margin-top: 5px; }
.mask { display: flex; margin-top: 7px; gap: 4px; }
.thumbwrap { width: 135px; height: 56px; background: #4e4e4e; padding: 3px; border-radius: 3px; }
.thumb { width: 50px; height: 50px; background: #fff; border: 1px solid #000; }
.maskctl { flex: 1; display: flex; flex-direction: column; }
.mask-btn { width: 96px; height: 20px; margin-top: -2px; border: 1px solid #8a8a8a; border-radius: 3px; display: flex; align-items: center; justify-content: center; font: 700 10px "Lato", sans-serif; color: #e8e8e8; }
.chk { display: flex; align-items: center; gap: 5px; color: #787878; margin: 6px 0 2px 1px; height: 13px; font: 10px "Lato", sans-serif; }
.chk i { width: 12px; height: 12px; border: 1px solid #707070; border-radius: 1px; }

.p-trazo { height: 28px; }
.t-trz { width: 50px; }
.p-mesas { flex: 1; }
.p-mesas .tabs { height: 28px; }
.p-mesas .tab.on { height: 28px; }
.t-mes { width: 96px; color: #f0f0f0; }
.fillbody { padding: 0; }

.bottomstrip { flex: none; height: 4px; background: #151515; }

/* floating panels */
.float { position: absolute; background: #535353; border: 1px solid #3c3c3c; box-shadow: 0 1px 3px rgba(0,0,0,.3); display: flex; flex-direction: column; align-items: center; border-radius: 4px 4px 0 0; }
.fhead { width: 100%; height: 13px; flex: none; background: #424242; display: flex; align-items: center; justify-content: flex-end; gap: 10px; padding-right: 4px; border-radius: 4px 4px 0 0; border-bottom: 1px solid #3a3a3a; }
.fhead .dbl { width: 8px; height: 6px; }
.fx { width: 7px; height: 7px; color: #ccc; }
.float .grip { margin-top: 4px; }
.f-ic { width: 20px; height: 20px; }
.f1 { left: 65px; top: 103px; width: 66px; height: 54px; }
.f1 .f-ic { margin-top: 7px; margin-right: 26px; }
.f2 { left: 63px; top: 195px; width: 39px; height: 111px; }
.f2 .f-ic { width: 18px; height: 18px; margin-top: 6px; }
.f-sel { width: 29px; height: 24px; margin-top: 4px; background: #3a3a3a; border: 1px solid #2e2e2e; border-radius: 3px; display: flex; align-items: center; justify-content: center; }
.f-sel svg { width: 16px; height: 16px; }
.f2 .cc { width: 22px; height: 16px; margin-top: 10px; }
.f3 { left: 102px; top: 206px; width: 232px; height: 142px; align-items: stretch; border-radius: 0; padding-top: 4px; background: #535353; box-shadow: 1px 1px 3px rgba(0,0,0,.4); }
.f3::before { content: ""; position: absolute; left: 0; right: 0; top: 0; height: 4px; background: #3f3f3f; }
.f3 .tabs { height: 26px; }
.t-est { width: 47px; }
.t-bus { width: 72px; padding-left: 8px; }
.t-bib { width: 47px; }
.f3-coll { width: 9px; height: 9px; position: absolute; left: 190px; top: 9px; }
.f3-bar { position: absolute; left: 206px; top: 7px; width: 1px; height: 11px; background: #aaa; }
.f3 .pmenu { right: 5px; }
.f3-body { padding: 9px 5px 0; }
.pf-row { display: flex; align-items: center; }
.pf-row svg { width: 14px; height: 14px; fill: #c8c8c8; }
.ol { fill: none; stroke: #c8c8c8; }
.ol.dim { stroke: #999; }
.dk { fill: none; stroke: #535353; }
.modes-row { padding: 9px 0 0 6px; gap: 23px; }
.expand { width: 71px; height: 20px; margin-left: -5px; background: #5a5a5a; color: #757575; display: flex; align-items: center; justify-content: center; font: 700 10px "Lato", sans-serif; }
.h-pf { margin-top: 10px; }
.finders { padding: 12px 0 0 9px; gap: 23px; }
.finders .last { margin-left: 2px; }
.f4 { left: 59px; top: 418px; width: 39px; height: 83px; }
.f4 .f-ic { width: 18px; height: 20px; margin-top: 7px; }
.f4 .f-ic:last-child { margin-top: 5px; }
.f5 { left: 985px; top: 97px; width: 39px; height: 54px; }
.f5 .f-ic { width: 17px; height: 12px; margin-top: 9px; }

.annot { position: absolute; left: 0; top: 0; width: 1365px; height: 729px; pointer-events: none; }
```
